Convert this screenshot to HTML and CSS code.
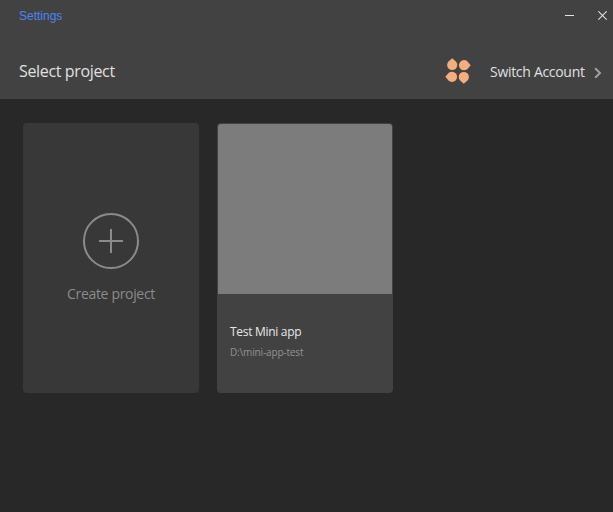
FILE: index.html
```html
<!DOCTYPE html>
<html lang="en">
<head>
<meta charset="utf-8">
<title>Settings</title>
<link rel="stylesheet" href="styles.css">
</head>
<body>
<header class="header">
  <div class="titlebar">
    <a class="settings"><span>Settings</span></a>
    <div class="controls">
      <svg width="9" height="10" viewBox="0 0 9 10"><path d="M0 4.5H9" stroke="#e4e4e4"/></svg>
      <svg width="9" height="10" viewBox="0 0 9 10"><path d="M.3.3 8.7 8.7M8.7.3.3 8.7" stroke="#dcdcdc" stroke-width="1.2"/></svg>
    </div>
  </div>
  <div class="toolbar">
    <h1 class="heading"><span>Select project</span></h1>
    <div class="account">
      <svg class="avatar" width="26" height="26" viewBox="0 0 26 26" fill="#f4ad7d">
        <path d="M7.2.3 10.9 3.5A5.1 5.1 0 1 1 3.5 3.5Z"/>
        <path d="M25.7 7.2 22.5 10.9A5.1 5.1 0 1 1 22.5 3.5Z"/>
        <path d="M.3 18.8 3.5 15.1A5.1 5.1 0 1 1 3.5 22.5Z"/>
        <path d="M18.8 25.7 15.1 22.5A5.1 5.1 0 1 1 22.5 22.5Z"/>
      </svg>
      <span class="switch">Switch Account</span>
      <svg class="chevron" width="8" height="12" viewBox="0 0 8 12"><path d="M1.2 1.2 6 6 1.2 10.8" fill="none" stroke="#a0a0a0" stroke-width="2"/></svg>
    </div>
  </div>
</header>
<main class="projects">
  <section class="card create">
    <svg width="56" height="56" viewBox="0 0 56 56" fill="none" stroke="#8b8b8b" stroke-width="2"><circle cx="28" cy="28" r="27"/><path d="M16 28H40M28 16V40"/></svg>
    <div class="create-label"><span>Create project</span></div>
  </section>
  <section class="card project">
    <div class="preview"></div>
    <div class="name"><span>Test Mini app</span></div>
    <div class="path"><span>D:\mini-app-test</span></div>
  </section>
</main>
</body>
</html>
```
FILE: styles.css
```css
* { box-sizing: border-box; }
body {
  margin: 0;
  height: 512px;
  overflow: hidden;
  background: #282828;
  font-family: "Open Sans", "Noto Sans", sans-serif;
  white-space: nowrap;
}
svg { display: block; flex: none; }
.header { height: 99px; background: #424242; }
.titlebar {
  height: 32px;
  padding: 0 6px 0 19px;
  display: flex;
  align-items: center;
  justify-content: space-between;
}
.settings { font: 12px/16px "Liberation Sans", sans-serif; color: #4a86f0; }
.controls { display: flex; gap: 24px; }
.toolbar {
  height: 80px;
  margin-top: -1px;
  padding: 0 11px 0 19px;
  display: flex;
  align-items: center;
  justify-content: space-between;
}
.heading { margin: 0; font-size: 16px; font-weight: 400; line-height: 22px; letter-spacing: -0.35px; color: #e0e0e0; }
.account { display: flex; align-items: center; }
.switch { width: 95px; margin: 2px 0 0 19px; font-size: 14px; line-height: 20px; letter-spacing: -0.3px; color: #e0e0e0; }
.chevron { margin: 3px 0 0 9px; }
.projects { display: flex; gap: 18px; padding: 24px 23px; }
.card { width: 176px; height: 270px; border-radius: 4px; overflow: hidden; }
.create {
  display: flex;
  flex-direction: column;
  align-items: center;
  padding-top: 90px;
  background: #383838;
}
.create-label { margin-top: 15px; font-size: 14px; line-height: 20px; letter-spacing: -0.33px; color: #8b8b8b; }
.project { padding: 1px; background: #424242; }
.preview { height: 170px; background: #7c7c7c; border-radius: 3px 3px 0 0; }
.name { margin: 29px 0 0 12px; font-size: 12px; line-height: 18px; letter-spacing: -0.3px; color: #e8e8e8; }
.path { margin: 4px 0 0 12px; font-size: 10px; line-height: 14px; letter-spacing: -0.15px; color: #929292; }
```
